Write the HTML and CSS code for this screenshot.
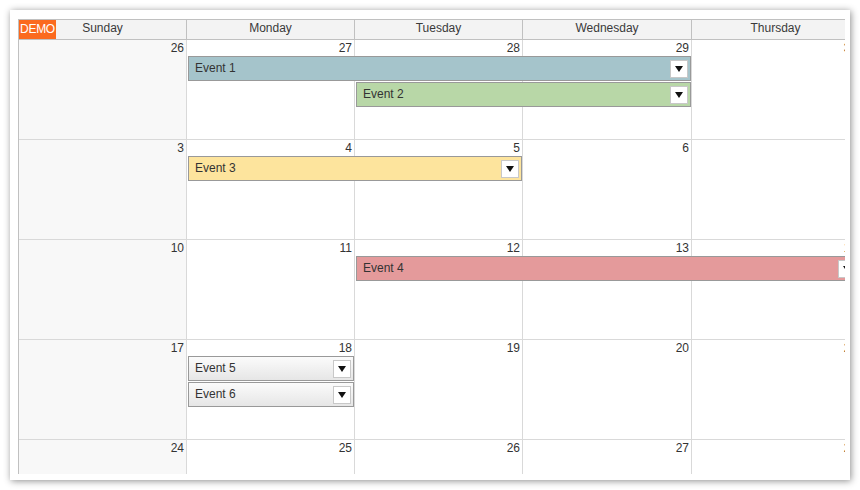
FILE: index.html
```html
<!DOCTYPE html>
<html>
<head>
<meta charset="utf-8">
<link rel="stylesheet" href="styles.css">
</head>
<body>
<div class="frame">
  <div class="calendar">
    <div class="demo">DEMO</div>
    <div class="header">
      <div class="hcell">Sunday</div>
      <div class="hcell">Monday</div>
      <div class="hcell">Tuesday</div>
      <div class="hcell">Wednesday</div>
      <div class="hcell">Thursday</div>
      <div class="hcell">Friday</div>
      <div class="hcell">Saturday</div>
    </div>

    <div class="week">
      <div class="day sun c1"><span class="num">26</span></div>
      <div class="day c2"><span class="num">27</span></div>
      <div class="day c3"><span class="num">28</span></div>
      <div class="day c4"><span class="num">29</span></div>
      <div class="day c5"><span class="num">30</span></div>
      <div class="day c6"><span class="num">31</span></div>
      <div class="day c7"><span class="num">1</span></div>
      <div class="event blue lane1 s2 e5"><span>Event 1</span><i class="btn"></i></div>
      <div class="event green lane2 s3 e5"><span>Event 2</span><i class="btn"></i></div>
    </div>

    <div class="week">
      <div class="day sun c1"><span class="num">3</span></div>
      <div class="day c2"><span class="num">4</span></div>
      <div class="day c3"><span class="num">5</span></div>
      <div class="day c4"><span class="num">6</span></div>
      <div class="day c5"><span class="num">7</span></div>
      <div class="day c6"><span class="num">8</span></div>
      <div class="day c7"><span class="num">9</span></div>
      <div class="event yellow lane1 s2 e4"><span>Event 3</span><i class="btn"></i></div>
    </div>

    <div class="week">
      <div class="day sun c1"><span class="num">10</span></div>
      <div class="day c2"><span class="num">11</span></div>
      <div class="day c3"><span class="num">12</span></div>
      <div class="day c4"><span class="num">13</span></div>
      <div class="day c5"><span class="num">14</span></div>
      <div class="day c6"><span class="num">15</span></div>
      <div class="day c7"><span class="num">16</span></div>
      <div class="event red lane1 s3 e6"><span>Event 4</span><i class="btn"></i></div>
    </div>

    <div class="week">
      <div class="day sun c1"><span class="num">17</span></div>
      <div class="day c2"><span class="num">18</span></div>
      <div class="day c3"><span class="num">19</span></div>
      <div class="day c4"><span class="num">20</span></div>
      <div class="day c5"><span class="num">21</span></div>
      <div class="day c6"><span class="num">22</span></div>
      <div class="day c7"><span class="num">23</span></div>
      <div class="event plain lane1 s2 e3"><span>Event 5</span><i class="btn"></i></div>
      <div class="event plain lane2 s2 e3"><span>Event 6</span><i class="btn"></i></div>
    </div>

    <div class="week">
      <div class="day sun c1"><span class="num">24</span></div>
      <div class="day c2"><span class="num">25</span></div>
      <div class="day c3"><span class="num">26</span></div>
      <div class="day c4"><span class="num">27</span></div>
      <div class="day c5"><span class="num">28</span></div>
      <div class="day c6"><span class="num">29</span></div>
      <div class="day c7"><span class="num">30</span></div>
    </div>
  </div>
</div>
</body>
</html>
```

FILE: styles.css
```css
html, body {
  margin: 0;
  padding: 0;
  background: #ffffff;
}

body {
  width: 860px;
  height: 490px;
  overflow: hidden;
  font-family: "Liberation Sans", Arial, sans-serif;
  font-size: 12px;
  color: #333333;
}

.frame {
  margin: 10px 0 0 10px;
  width: 840px;
  height: 470px;
  box-sizing: border-box;
  padding: 9px 4px 6px 8px;
  background: #ffffff;
  box-shadow: 1px 1px 7px rgba(0, 0, 0, 0.45);
}

.calendar {
  position: relative;
  width: 827px;
  height: 455px;
  overflow: hidden;
  border-left: 1px solid #c0c0c0;
  border-top: 1px solid #c0c0c0;
  box-sizing: border-box;
}

.header,
.week {
  display: grid;
  grid-template-columns: 168px 168px 168px 169px 168px 168px 168px;
  width: 1177px;
}

.header {
  height: 20px;
}

.hcell {
  background: #f3f3f3;
  border-right: 1px solid #c0c0c0;
  border-bottom: 1px solid #c0c0c0;
  text-align: center;
  line-height: 17px;
  color: #3a3a3a;
}

.demo {
  position: absolute;
  left: 0;
  top: 0;
  width: 37px;
  height: 19px;
  background: #fb6a1e;
  color: #ffffff;
  line-height: 18px;
  text-align: center;
  font-size: 12px;
  letter-spacing: -0.3px;
}

.week {
  height: 100px;
  grid-template-rows: 16px 26px 26px 1fr;
}

.day {
  grid-row: 1 / -1;
  border-right: 1px solid #d9d9d9;
  border-bottom: 1px solid #d9d9d9;
  background: #ffffff;
  text-align: right;
  padding-right: 2px;
  line-height: 16px;
}

.day.sun {
  background: #f8f8f8;
}

.c1 { grid-column: 1; }
.c2 { grid-column: 2; }
.c3 { grid-column: 3; }
.c4 { grid-column: 4; }
.c5 { grid-column: 5; }
.c6 { grid-column: 6; }
.c7 { grid-column: 7; }

.num {
  color: #333333;
}

.event {
  height: 25px;
  box-sizing: border-box;
  border: 1px solid #999999;
  margin: 0 1px 0 1px;
  display: flex;
  align-items: center;
  padding: 0 2px 2px 6px;
  color: #333333;
  align-self: start;
  z-index: 1;
}

.lane1 { grid-row: 2; }
.lane2 { grid-row: 3; }

.s2.e3 { grid-column: 2 / 3; }
.s2.e4 { grid-column: 2 / 4; }
.s2.e5 { grid-column: 2 / 5; }
.s3.e5 { grid-column: 3 / 5; }
.s3.e6 { grid-column: 3 / 6; }

.blue { background: #a5c4cb; }
.green { background: #b8d7a7; }
.yellow { background: #fde49d; }
.red { background: #e49a9b; }
.plain { background: linear-gradient(#fbfbfb, #e6e6e6); }

.btn {
  margin-left: auto;
  margin-top: 2px;
  width: 16px;
  height: 16px;
  border: 1px solid #c8c8c8;
  background: #ffffff;
  display: flex;
  align-items: center;
  justify-content: center;
}

.btn::after {
  content: "";
  width: 0;
  height: 0;
  border-left: 4px solid transparent;
  border-right: 4px solid transparent;
  border-top: 6px solid #111111;
  margin-top: 1px;
}
```
